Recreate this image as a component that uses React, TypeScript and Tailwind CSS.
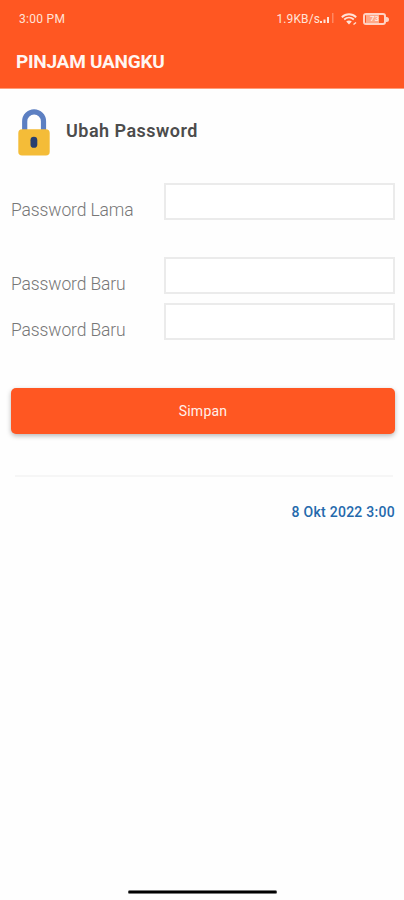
import React from "react";

function StatusBar() {
  return (
    <div className="flex h-[38px] items-center pl-[19px] pr-[15px] text-[#ffe3d8]">
      <span className="text-[12px] leading-[14px] tracking-[0.3px]">3:00 PM</span>
      <span className="-mr-px ml-auto text-[12px] leading-[14px] tracking-[0.1px]">1.9KB/s</span>
      <svg width="17" height="12" viewBox="0 0 17 12" fill="currentColor">
        <rect x="1" y="8" width="2" height="2" />
        <rect x="4.5" y="6.5" width="2" height="3.5" />
        <rect x="8" y="4" width="2" height="6" />
        <rect x="13" y="0" width="1.5" height="10" opacity=".35" />
      </svg>
      <svg className="ml-[5px]" width="16" height="13" viewBox="0 0 16 13" fill="none" stroke="currentColor">
        <path d="M0.8 4.2C5 .2 11 .2 15.2 4.2" strokeWidth="1.9" />
        <path d="M3.2 6.5C6 4 10 4 12.8 6.5" strokeWidth="1.7" />
        <path d="M5.2 8.6C6.8 7.2 9.2 7.2 10.8 8.6L8 11.6Z" fill="currentColor" stroke="none" />
        <path d="M12.5 11.5L15 9.5" strokeWidth="1.4" />
      </svg>
      <div className="ml-[6px] flex items-center">
        <div className="relative flex h-[12px] w-[23px] items-center justify-center rounded-[3px] border-2 border-[#ffd3c4]">
          <div className="absolute inset-y-0 left-px w-[13px] bg-[#ffa988]" />
          <span className="relative text-[8px] font-medium leading-none text-[#fff1eb]">73</span>
        </div>
        <div className="h-[5px] w-[3px] rounded-r-sm bg-[#ffd3c4]" />
      </div>
    </div>
  );
}

function LockIcon() {
  return (
    <svg width="32" height="47" viewBox="0 0 32 47" fill="none">
      <path d="M6.7 22V12.2a9.4 9.4 0 0 1 18.8 0V22" stroke="#5c7fc2" strokeWidth="5.2" />
      <rect x="0.3" y="20.2" width="31.4" height="26.3" rx="3.8" fill="#f4bc38" />
      <rect x="12.5" y="27.8" width="6.8" height="11" rx="3.4" fill="#293f6e" />
    </svg>
  );
}

function Field({ label, className }: { label: string; className: string }) {
  return (
    <label className={`flex h-[37px] items-start ${className}`}>
      <span className="w-[153px] pt-[16px] text-[17.5px] font-light leading-[23px] tracking-[-0.12px] text-[#777]">{label}</span>
      <input type="password" className="h-[37px] min-w-0 flex-1 border-2 border-[#ebebeb] bg-white outline-none" />
    </label>
  );
}

export default function App() {
  return (
    <div className="flex h-[900px] w-[404px] flex-col overflow-hidden bg-[#fefefe] font-['Roboto',sans-serif]">
      <header className="h-[89px] shrink-0 border-b border-[#ff9d79] bg-[#ff5722]">
        <StatusBar />
        <h1 className="pl-4 pt-[12px] text-[19px] font-bold leading-[24px] tracking-[-0.25px] text-[#fff6f2]">PINJAM UANGKU</h1>
      </header>
      <main className="flex flex-1 flex-col pl-[11px] pr-[9px]">
        <div className="flex h-[94px] items-start pl-[7px] pt-[20px]">
          <LockIcon />
          <h2 className="ml-4 mt-[10px] text-[18px] font-semibold leading-[24px] tracking-[0.48px] text-[#4c4c4c]">Ubah Password</h2>
        </div>
        <Field label="Password Lama" className="" />
        <Field label="Password Baru" className="mt-[37px]" />
        <Field label="Password Baru" className="mt-[9px]" />
        <button className="mt-[48px] h-[46px] w-full rounded-[5px] bg-[#ff5722] text-[14px] leading-[20px] tracking-[0.25px] text-[#fff0ea] shadow-[0_2px_5px_rgba(0,0,0,0.28)]">
          Simpan
        </button>
        <hr className="ml-1 mr-0.5 mt-[41px] border-t-2 border-[#f6f6f6]" />
        <p className="mt-[25px] text-right text-[14px] font-medium leading-[20px] tracking-[0.27px] text-[#2469ac]">8 Okt 2022 3:00</p>
      </main>
      <div className="mb-[6px] ml-[128px] h-[4px] w-[149px] shrink-0 rounded-full border-y border-[#777] bg-black" />
    </div>
  );
}
